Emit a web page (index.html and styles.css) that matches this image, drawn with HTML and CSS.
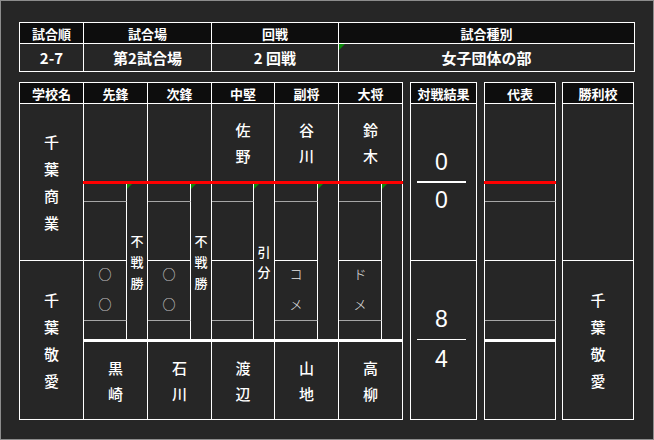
FILE: index.html
```html
<!DOCTYPE html>
<html lang="ja">
<head>
<meta charset="utf-8">
<title>試合結果</title>
<link rel="stylesheet" href="styles.css">
</head>
<body>
<div class="page">
  <div class="info">
    <div class="ih">試合順</div>
    <div class="ih">試合場</div>
    <div class="ih">回戦</div>
    <div class="ih">試合種別</div>
    <div class="id">2-7</div>
    <div class="id">第2試合場</div>
    <div class="id">2 回戦</div>
    <div class="id flag">女子団体の部</div>
  </div>

  <div class="board">
    <div class="match">
      <div class="h">学校名</div>
      <div class="h span2">先鋒</div>
      <div class="h span2">次鋒</div>
      <div class="h span2">中堅</div>
      <div class="h span2">副将</div>
      <div class="h span2">大将</div>

      <div class="school bw"><div class="v sv">千葉商業</div></div>
      <div class="c span2 nm"><div class="v"></div></div>
      <div class="c span2 nm"><div class="v"></div></div>
      <div class="c span2 nm"><div class="v">佐野</div></div>
      <div class="c span2 nm"><div class="v">谷川</div></div>
      <div class="c span2 nm"><div class="v">鈴木</div></div>

      <div class="redline"></div>

      <div class="c bg"></div>
      <div class="c narrow flag"><div class="v nv">不戦勝</div></div>
      <div class="c bg"></div>
      <div class="c narrow flag"><div class="v nv">不戦勝</div></div>
      <div class="c bg"></div>
      <div class="c narrow flag"><div class="v nv hk">引分</div></div>
      <div class="c bg"></div>
      <div class="c narrow flag"><div class="v nv"></div></div>
      <div class="c bg"></div>
      <div class="c narrow flag"><div class="v nv"></div></div>

      <div class="c bw"></div>
      <div class="c bw"></div>
      <div class="c bw"></div>
      <div class="c bw"></div>
      <div class="c bw"></div>

      <div class="school bw"><div class="v sv">千葉敬愛</div></div>
      <div class="c bg mk"><div class="v">○○</div></div>
      <div class="c bg mk"><div class="v">○○</div></div>
      <div class="c bg mk"><div class="v"></div></div>
      <div class="c bg mk"><div class="v">コメ</div></div>
      <div class="c bg mk"><div class="v">ドメ</div></div>

      <div class="c"></div>
      <div class="c"></div>
      <div class="c"></div>
      <div class="c"></div>
      <div class="c"></div>

      <div class="whiteline"></div>

      <div class="c span2 bw nm"><div class="v">黒崎</div></div>
      <div class="c span2 bw nm"><div class="v">石川</div></div>
      <div class="c span2 bw nm"><div class="v">渡辺</div></div>
      <div class="c span2 bw nm"><div class="v">山地</div></div>
      <div class="c span2 bw nm"><div class="v">高柳</div></div>
    </div>

    <div class="box result">
      <div class="bh">対戦結果</div>
      <div class="score upper">
        <div class="num">0</div>
        <div class="bar thick"></div>
        <div class="num second">0</div>
      </div>
      <div class="score lower">
        <div class="num">8</div>
        <div class="bar"></div>
        <div class="num second">4</div>
      </div>
    </div>

    <div class="rep">
      <div class="h">代表</div>
      <div class="c"></div>
      <div class="redline"></div>
      <div class="c bg"></div>
      <div class="c bw"></div>
      <div class="c bg"></div>
      <div class="c"></div>
      <div class="whiteline"></div>
      <div class="c bw"></div>
    </div>

    <div class="box winner">
      <div class="bh">勝利校</div>
      <div class="wcell top"></div>
      <div class="wcell"><div class="v sv">千葉敬愛</div></div>
    </div>
  </div>
</div>
</body>
</html>
```

FILE: styles.css
```css
* {
  box-sizing: border-box;
  margin: 0;
  padding: 0;
}

html, body {
  width: 654px;
  height: 440px;
  background: #262626;
  overflow: hidden;
}

body {
  font-family: "Noto Sans CJK JP", "Noto Sans", sans-serif;
  color: #ffffff;
}

.page {
  width: 654px;
  height: 440px;
  border: 1px solid #8c8c8c;
  padding: 21px 0 0 18px;
}

/* ---- top info table ---- */
.info {
  display: grid;
  width: 616px;
  grid-template-columns: 64px 128px 127px 296px;
  grid-template-rows: 21px 28px;
  border-left: 1px solid #fff;
  border-top: 1px solid #fff;
}

.ih, .id {
  border-right: 1px solid #fff;
  border-bottom: 1px solid #fff;
  display: flex;
  align-items: center;
  justify-content: center;
  white-space: nowrap;
}

.ih {
  background: #0d0d0d;
  font-size: 13px;
  font-weight: 700;
}

.id {
  font-size: 15px;
  font-weight: 700;
}

.flag {
  position: relative;
}

.flag::before {
  content: "";
  position: absolute;
  left: 0;
  top: 0;
  border-top: 5px solid #0a8a0a;
  border-right: 5px solid transparent;
}

.id.flag::before {
  border-top-width: 6px;
  border-right-width: 6px;
}

/* ---- lower board ---- */
.board {
  display: flex;
  align-items: flex-start;
  margin-top: 10px;
}

.match {
  display: grid;
  width: 384px;
  grid-template-columns: 64px 43px 21px 43px 21px 42px 21px 43px 21px 43px 21px;
  grid-template-rows: 21px 77px 3px 18px 59px 60px 18px 3px 78px;
  border-left: 1px solid #fff;
  border-top: 1px solid #fff;
}

.h {
  background: #0d0d0d;
  border-right: 1px solid #fff;
  border-bottom: 1px solid #fff;
  display: flex;
  align-items: center;
  justify-content: center;
  font-size: 13px;
  font-weight: 700;
  white-space: nowrap;
}

.span2 {
  grid-column: span 2;
}

.c {
  border-right: 1px solid #fff;
  display: flex;
  align-items: center;
  justify-content: center;
}

.bw {
  border-bottom: 1px solid #fff;
}

.bg {
  border-bottom: 1px solid #a6a6a6;
}

.school {
  grid-row: span 4;
  border-right: 1px solid #fff;
  display: flex;
  align-items: center;
  justify-content: center;
}

.v {
  width: 1em;
  word-break: break-all;
  text-align: center;
}

.sv {
  font-size: 15px;
  line-height: 27px;
  font-weight: 500;
}

.nm .v {
  font-size: 15px;
  line-height: 26px;
  font-weight: 500;
}

.redline {
  grid-column: span 10;
  background: #ff0000;
  margin-left: -1px;
}

.whiteline {
  grid-column: span 10;
  background: #ffffff;
}

.narrow {
  grid-row: span 4;
}

.nv {
  font-size: 13px;
  line-height: 21px;
  font-weight: 500;
}

.nv.hk {
  line-height: 20px;
}

.mk {
  padding-bottom: 4px;
}

.mk .v {
  font-size: 13px;
  line-height: 30px;
  font-weight: 300;
  color: #e6e6e6;
}

/* ---- side boxes ---- */
.box {
  border: 1px solid #fff;
  height: 338px;
  display: flex;
  flex-direction: column;
}

.bh {
  height: 21px;
  flex: none;
  background: #0d0d0d;
  border-bottom: 1px solid #fff;
  display: flex;
  align-items: center;
  justify-content: center;
  font-size: 13px;
  font-weight: 700;
  white-space: nowrap;
}

.result {
  width: 67px;
  margin-left: 7px;
}

.score {
  display: flex;
  flex-direction: column;
  padding-left: 6px;
}

.score.upper {
  height: 157px;
  flex: none;
  border-bottom: 1px solid #fff;
  padding-top: 43px;
}

.score.lower {
  flex: 1;
  padding-top: 43px;
}

.num {
  width: 49px;
  height: 30px;
  line-height: 30px;
  text-align: center;
  font-family: "Liberation Sans", Arial, sans-serif;
  font-size: 23px;
}

.bar {
  width: 49px;
  height: 1px;
  background: #fff;
  margin-top: 5px;
}

.bar.thick {
  height: 2px;
  margin-top: 4px;
}

.upper .second {
  margin-top: 2px;
}

.lower .second {
  margin-top: 4px;
}

.rep {
  display: grid;
  width: 72px;
  margin-left: 7px;
  grid-template-columns: 71px;
  grid-template-rows: 21px 77px 3px 18px 59px 60px 18px 3px 78px;
  border-left: 1px solid #fff;
  border-top: 1px solid #fff;
}

.rep .redline,
.rep .whiteline {
  grid-column: auto;
}

.winner {
  width: 72px;
  margin-left: 6px;
}

.wcell {
  flex: 1;
  display: flex;
  align-items: center;
  justify-content: center;
}

.wcell.top {
  height: 157px;
  flex: none;
  border-bottom: 1px solid #fff;
}
```
